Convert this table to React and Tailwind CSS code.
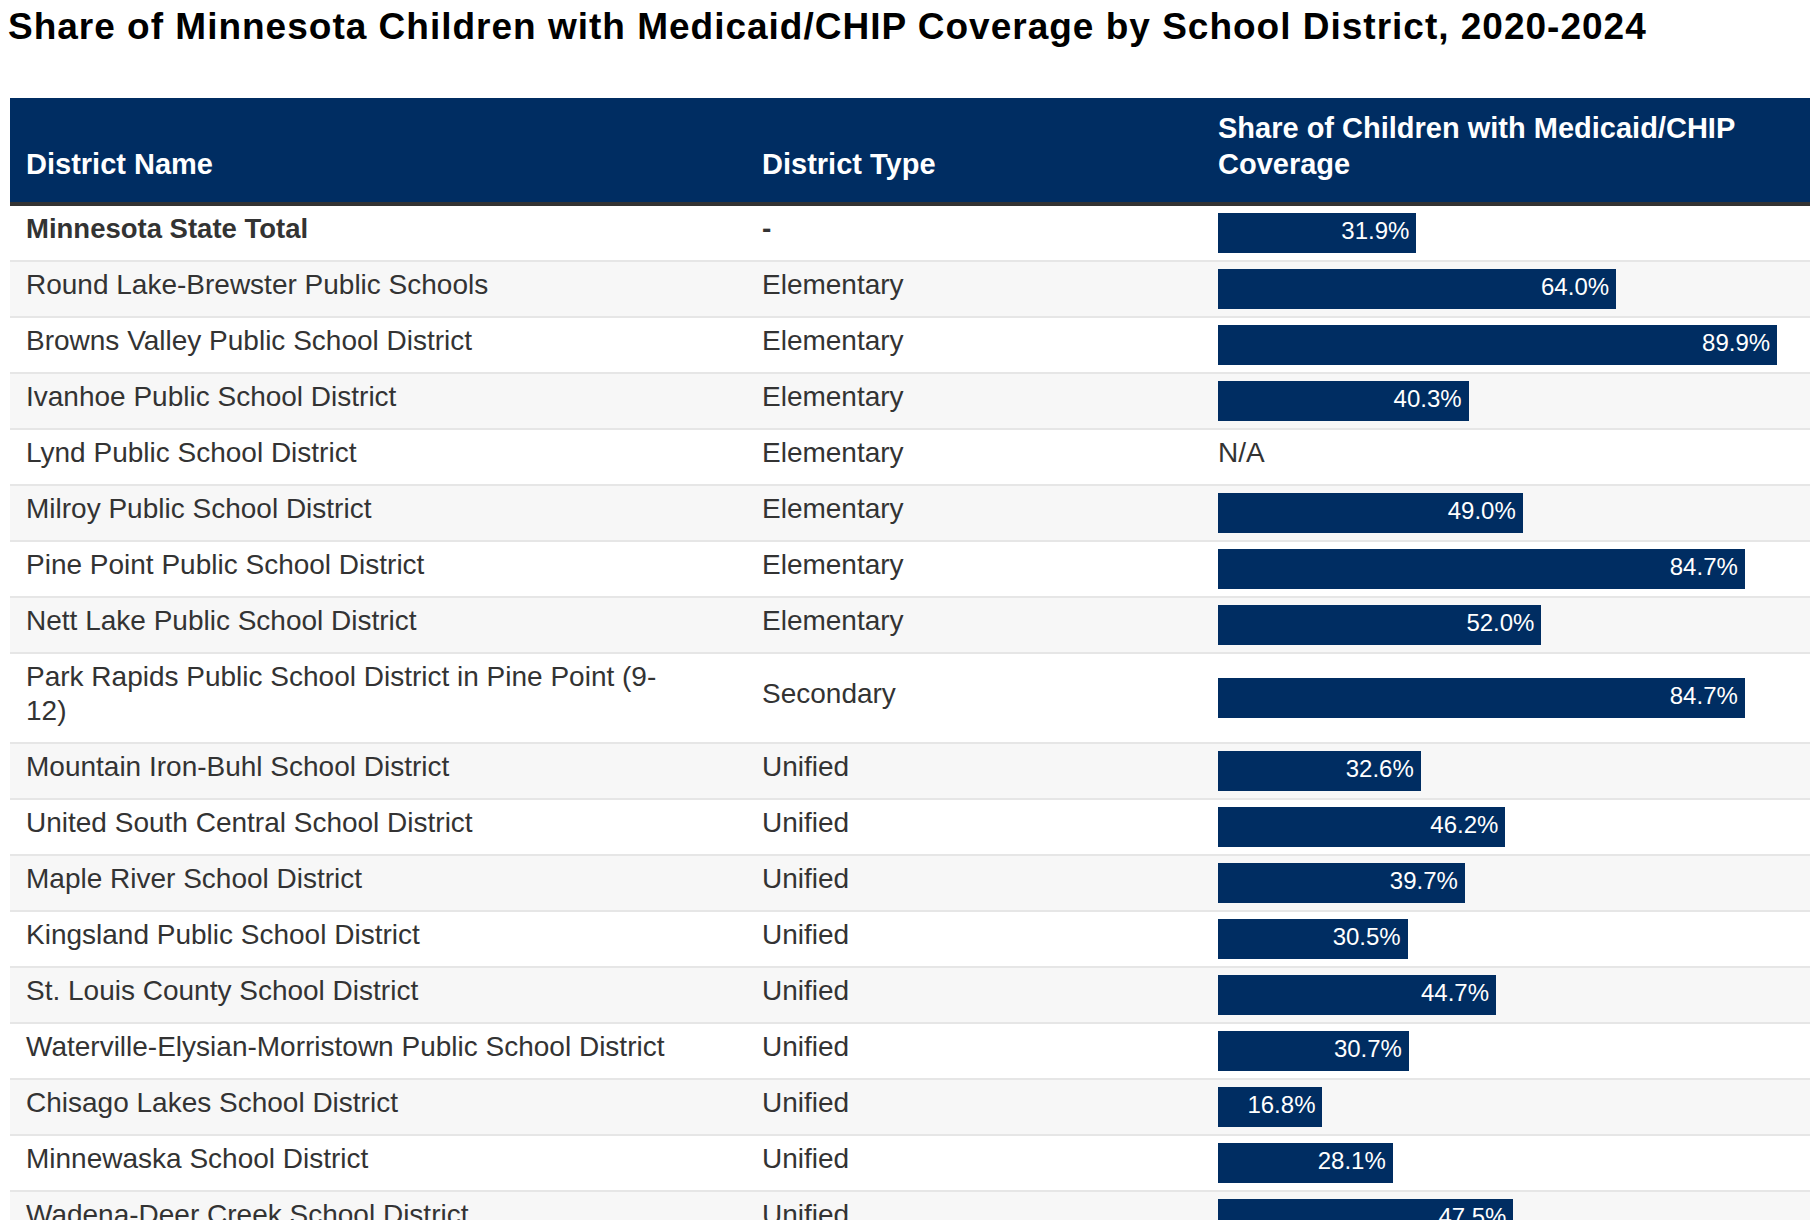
import React from 'react';

const rows = [
  { name: 'Minnesota State Total', type: '-', value: 31.9, total: true },
  { name: 'Round Lake-Brewster Public Schools', type: 'Elementary', value: 64.0 },
  { name: 'Browns Valley Public School District', type: 'Elementary', value: 89.9 },
  { name: 'Ivanhoe Public School District', type: 'Elementary', value: 40.3 },
  { name: 'Lynd Public School District', type: 'Elementary', value: null },
  { name: 'Milroy Public School District', type: 'Elementary', value: 49.0 },
  { name: 'Pine Point Public School District', type: 'Elementary', value: 84.7 },
  { name: 'Nett Lake Public School District', type: 'Elementary', value: 52.0 },
  { name: 'Park Rapids Public School District in Pine Point (9-12)', type: 'Secondary', value: 84.7 },
  { name: 'Mountain Iron-Buhl School District', type: 'Unified', value: 32.6 },
  { name: 'United South Central School District', type: 'Unified', value: 46.2 },
  { name: 'Maple River School District', type: 'Unified', value: 39.7 },
  { name: 'Kingsland Public School District', type: 'Unified', value: 30.5 },
  { name: 'St. Louis County School District', type: 'Unified', value: 44.7 },
  { name: 'Waterville-Elysian-Morristown Public School District', type: 'Unified', value: 30.7 },
  { name: 'Chisago Lakes School District', type: 'Unified', value: 16.8 },
  { name: 'Minnewaska School District', type: 'Unified', value: 28.1 },
  { name: 'Wadena-Deer Creek School District', type: 'Unified', value: 47.5 },
];

// bar pixels per percentage point
const SCALE = 6.22;

const Bar = ({ value }) => {
  if (value == null) {
    return <span className="block pt-[6px] pb-[14px] leading-[34px] text-[28px] text-[#333]">N/A</span>;
  }
  return (
    <div
      className="h-10 bg-[#002d62] flex items-center justify-end pr-[7px] pb-1 text-white text-[24px]"
      style={{ width: `${value * SCALE}px` }}
    >
      {value.toFixed(1)}%
    </div>
  );
};

const Row = ({ row, idx }) => {
  const bg = idx % 2 === 1 ? 'bg-[#f7f7f7]' : 'bg-white';
  return (
    <div className={`grid grid-cols-[736px_456px_608px] items-center border-b-2 border-[#e6e6e6] ${bg}`}>
      <div
        className={`pl-4 pr-[72px] pt-[6px] pb-[14px] leading-[34px] text-[#333] ${
          row.total ? 'font-bold text-[27.5px]' : 'text-[28px]'
        }`}
      >
        {row.name}
      </div>
      <div className={`px-4 pt-[6px] pb-[14px] leading-[34px] text-[28px] text-[#333] ${row.total ? 'font-bold' : ''}`}>
        {row.type}
      </div>
      <div className="px-4">
        <Bar value={row.value} />
      </div>
    </div>
  );
};

export default function App() {
  return (
    <div className="bg-white min-h-screen font-['Liberation_Sans',Arial,sans-serif]">
      <h1 className="pl-2 pt-[6px] text-[37px] font-bold text-black leading-[42px] tracking-[1px]">
        Share of Minnesota Children with Medicaid/CHIP Coverage by School District, 2020-2024
      </h1>
      <div className="mx-[10px] mt-[50px]">
        <div className="grid grid-cols-[736px_456px_608px] items-end bg-[#002d62] text-white text-[29px] font-bold leading-[36px] border-b-4 border-[#333]">
          <div className="px-4 pt-3 pb-5">District Name</div>
          <div className="px-4 pt-3 pb-5">District Type</div>
          <div className="px-4 pt-3 pb-5">Share of Children with Medicaid/CHIP Coverage</div>
        </div>
        {rows.map((row, i) => (
          <Row key={row.name} row={row} idx={i} />
        ))}
      </div>
    </div>
  );
}
